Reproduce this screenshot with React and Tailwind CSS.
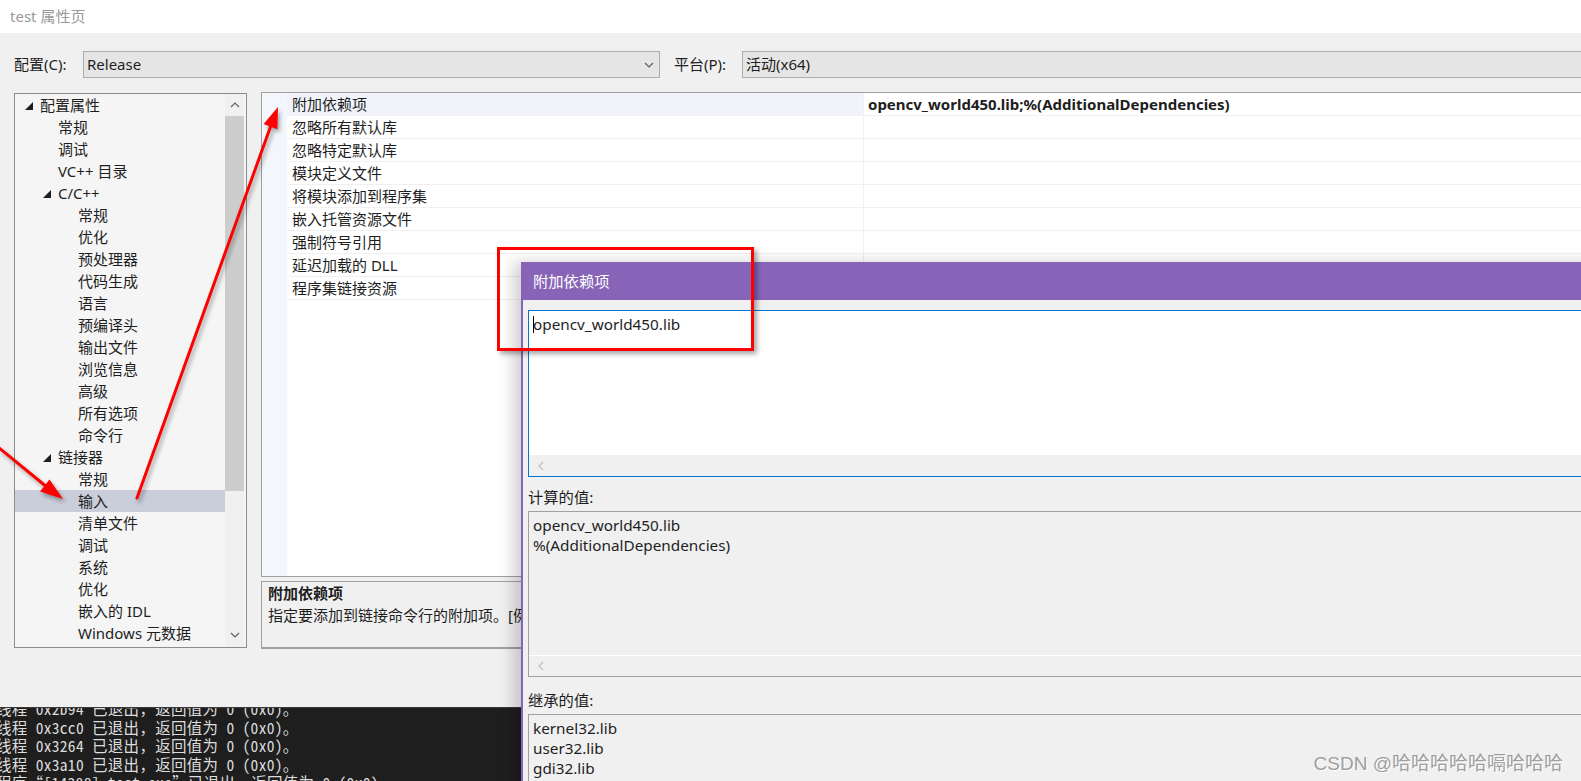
import React from "react";

const treeItems = [
  { t: "配置属性", lv: 1, tri: true },
  { t: "常规", lv: 2 },
  { t: "调试", lv: 2 },
  { t: "VC++ 目录", lv: 2 },
  { t: "C/C++", lv: 2, tri: true },
  { t: "常规", lv: 3 },
  { t: "优化", lv: 3 },
  { t: "预处理器", lv: 3 },
  { t: "代码生成", lv: 3 },
  { t: "语言", lv: 3 },
  { t: "预编译头", lv: 3 },
  { t: "输出文件", lv: 3 },
  { t: "浏览信息", lv: 3 },
  { t: "高级", lv: 3 },
  { t: "所有选项", lv: 3 },
  { t: "命令行", lv: 3 },
  { t: "链接器", lv: 2, tri: true },
  { t: "常规", lv: 3 },
  { t: "输入", lv: 3, sel: true },
  { t: "清单文件", lv: 3 },
  { t: "调试", lv: 3 },
  { t: "系统", lv: 3 },
  { t: "优化", lv: 3 },
  { t: "嵌入的 IDL", lv: 3 },
  { t: "Windows 元数据", lv: 3 },
];

const gridRows = [
  "附加依赖项",
  "忽略所有默认库",
  "忽略特定默认库",
  "模块定义文件",
  "将模块添加到程序集",
  "嵌入托管资源文件",
  "强制符号引用",
  "延迟加载的 DLL",
  "程序集链接资源",
];

const consoleLines = [
  "线程 0x2b94 已退出，返回值为 0 (0x0)。",
  "线程 0x3cc0 已退出，返回值为 0 (0x0)。",
  "线程 0x3264 已退出，返回值为 0 (0x0)。",
  "线程 0x3a10 已退出，返回值为 0 (0x0)。",
  "程序“[14388] test.exe”已退出，返回值为 0 (0x0)。",
];

function Tri() {
  return (
    <svg width="8" height="8" viewBox="0 0 8 8" className="mt-[2px]">
      <polygon points="8,0 8,8 0,8" fill="#1e1e1e" />
    </svg>
  );
}

function Chevron({ dir = "down", color = "#606060", w = 10, h = 6 }) {
  const pts =
    dir === "down"
      ? "1,1 5,5 9,1"
      : dir === "up"
      ? "1,5 5,1 9,5"
      : "5,1 1,5 5,9";
  const vb = dir === "left" ? "0 0 6 10" : "0 0 10 6";
  return (
    <svg width={w} height={h} viewBox={vb}>
      <polyline points={pts} fill="none" stroke={color} strokeWidth="1.2" />
    </svg>
  );
}

export default function App() {
  return (
    <div className="relative w-[1581px] h-[781px] overflow-hidden bg-[#f0f0f0] font-['Noto_Sans','Noto_Sans_CJK_SC',sans-serif] text-[15px] text-[#1e1e1e]">
      {/* title bar */}
      <div className="h-[33px] bg-white flex items-center pl-[10px] text-[#9a9a9a] text-[15px]">
        test 属性页
      </div>

      {/* property page body */}
      <div className="h-[674px] flex flex-col pl-[14px]">
        {/* config row */}
        <div className="mt-[18px] h-[27px] flex items-center">
          <span className="w-[69px] leading-none">配置(C):</span>
          <div className="w-[577px] h-full bg-[#e5e5e5] border border-[#adadad] flex items-center justify-between pl-[3px] pr-[5px]">
            <span>Release</span>
            <Chevron />
          </div>
          <span className="ml-[14px] w-[68px] leading-none">平台(P):</span>
          <div className="flex-1 -mr-[4px] h-full bg-[#e5e5e5] border border-[#adadad] flex items-center pl-[3px]">
            活动(x64)
          </div>
        </div>

        {/* panels */}
        <div className="mt-[14px] flex gap-[14px]">
          {/* tree */}
          <div className="w-[233px] h-[555px] mt-[1px] border border-[#8c8c8c] bg-[#f5f5f5] flex">
            <div className="flex-1">
              {treeItems.map((it, i) => (
                <div
                  key={i}
                  className={
                    "h-[22px] flex items-center whitespace-nowrap " +
                    (it.sel ? "bg-[#cacdda] " : "") +
                    (it.lv === 1
                      ? "pl-[10px]"
                      : it.lv === 2
                      ? it.tri
                        ? "pl-[28px]"
                        : "pl-[43px]"
                      : "pl-[63px]")
                  }
                >
                  {it.tri && (
                    <span className="w-[15px] flex items-center">
                      <Tri />
                    </span>
                  )}
                  <span>{it.t}</span>
                </div>
              ))}
            </div>
            <div className="w-[19px] mr-[2px] flex flex-col">
              <div className="h-[22px] flex items-center justify-center bg-[#f0f0f0]">
                <Chevron dir="up" />
              </div>
              <div className="h-[375px] bg-[#cdcdcd]"></div>
              <div className="flex-1 bg-[#f0f0f0]"></div>
              <div className="h-[24px] flex items-center justify-center bg-[#f0f0f0]">
                <Chevron dir="down" />
              </div>
            </div>
          </div>

          {/* right column */}
          <div className="flex-1 flex flex-col gap-[4px] -mr-[10px]">
            <div className="h-[485px] border border-[#a0a0a0] bg-white flex">
              <div className="w-[25px] bg-[#f3f6fb]"></div>
              <div className="flex-1 flex flex-col">
                {gridRows.map((r, i) => (
                  <div
                    key={i}
                    className="h-[23px] flex border-b border-[#f0f0f0]"
                  >
                    <div
                      className={
                        "w-[576px] pl-[5px] flex items-center " +
                        (i === 0 ? "bg-[#f0f4fa]" : "")
                      }
                    >
                      {r}
                    </div>
                    <div className="flex-1 border-l border-[#f0f0f0] pl-[4px] flex items-center font-bold text-[15px]">
                      {i === 0 ? "opencv_world450.lib;%(AdditionalDependencies)" : ""}
                    </div>
                  </div>
                ))}
              </div>
            </div>
            <div className="h-[68px] border border-[#a0a0a0] border-b-2 bg-[#f0f0f0] pl-[6px] leading-[22px]">
              <div className="font-bold">附加依赖项</div>
              <div>指定要添加到链接命令行的附加项。[例如 kernel32.lib]</div>
            </div>
          </div>
        </div>
      </div>

      {/* console */}
      <div className="h-[74px] bg-[#1e1e1e] border-t border-[#3a3a3a] overflow-hidden">
        <div className="-mt-[9px] -ml-[4px] text-[#dcdcdc] text-[15.5px] leading-[18.5px] tracking-[0.3px] whitespace-pre font-['Noto_Sans_Mono_CJK_SC','Liberation_Mono','Noto_Sans_CJK_SC',monospace]">
          {consoleLines.map((l, i) => (
            <div key={i}>{l}</div>
          ))}
        </div>
      </div>

      {/* dialog */}
      <div className="absolute left-[521px] top-[262px] w-[1200px] h-[600px] bg-[#f0f0f0] border-l-2 border-[#8764b8] shadow-[-8px_0_14px_rgba(0,0,0,0.18)] text-[15.3px]">
        <div className="h-[38px] bg-[#8764b8] text-white flex items-center pl-[10px]">
          附加依赖项
        </div>
        <div className="pl-[5px]">
          <div className="mt-[10px] h-[167px] border border-[#0078d7] bg-white relative">
            <div className="pt-[3px] pl-[4px] leading-[20px] flex items-center">
              <span className="w-[1px] h-[17px] bg-black -mr-[1px]"></span>
              <span>opencv_world450.lib</span>
            </div>
            <div className="absolute left-0 right-0 bottom-0 h-[21px] bg-[#f0f0f0] flex items-center pl-[9px]">
              <Chevron dir="left" color="#c0c0c0" w={6} h={10} />
            </div>
          </div>
          <div className="h-[34px] pt-[9px] leading-[22px]">计算的值:</div>
          <div className="h-[166px] border border-[#a0a0a0] bg-[#f0f0f0] relative">
            <div className="pt-[3px] pl-[4px] leading-[20px]">
              <div>opencv_world450.lib</div>
              <div>%(AdditionalDependencies)</div>
            </div>
            <div className="absolute left-0 right-0 bottom-0 h-[21px] border-t border-white bg-[#f0f0f0] flex items-center pl-[9px]">
              <Chevron dir="left" color="#c0c0c0" w={6} h={10} />
            </div>
          </div>
          <div className="h-[37px] pt-[12px] leading-[22px]">继承的值:</div>
          <div className="h-[200px] border border-[#a0a0a0] bg-[#f0f0f0]">
            <div className="pt-[3px] pl-[4px] leading-[20px]">
              <div>kernel32.lib</div>
              <div>user32.lib</div>
              <div>gdi32.lib</div>
            </div>
          </div>
        </div>
      </div>

      {/* red annotation rectangle */}
      <div className="absolute left-[497px] top-[247px] w-[257px] h-[104px] border-[3px] border-[#ff0000] shadow-[3px_3px_5px_rgba(0,0,0,0.35)]"></div>

      {/* red arrows */}
      <svg
        className="absolute inset-0 pointer-events-none drop-shadow-[2px_3px_2px_rgba(0,0,0,0.35)]"
        width="1581"
        height="781"
      >
        <line x1="137" y1="498" x2="270.5" y2="126.7" stroke="#ff0000" strokeWidth="3" strokeLinecap="round" />
        <polygon points="278,107 277.4,129.3 263.6,124.1" fill="#ff0000" />
        <line x1="-2" y1="447" x2="45" y2="485.5" stroke="#ff0000" strokeWidth="3" strokeLinecap="round" />
        <polygon points="63,499 40,491.5 49.5,479.5" fill="#ff0000" />
      </svg>

      {/* watermark */}
      <div className="absolute right-[18px] top-[751px] text-[19px] leading-[26px] text-[#9e9e9e] font-['Liberation_Sans','Noto_Sans_CJK_SC',sans-serif] [text-shadow:1px_1px_0_#ffffff]">
        CSDN @哈哈哈哈哈嗝哈哈哈
      </div>
    </div>
  );
}
